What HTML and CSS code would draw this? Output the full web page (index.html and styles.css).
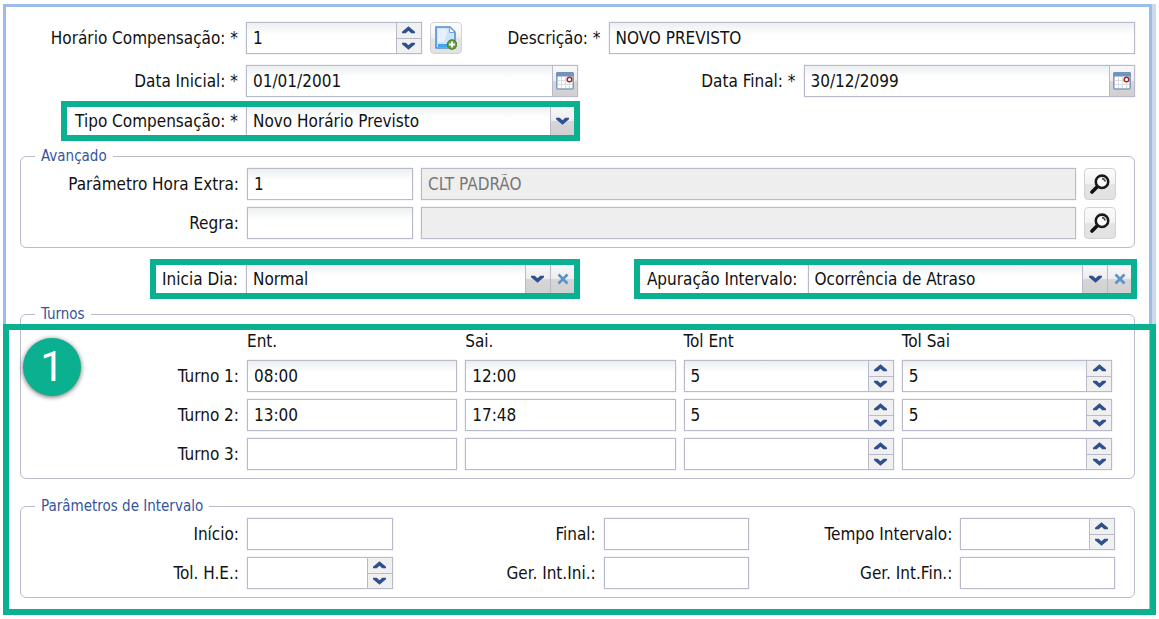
FILE: index.html
```html
<!DOCTYPE html>
<html lang="pt-BR">
<head>
  <meta charset="UTF-8" />
  <meta name="viewport" content="width=device-width, initial-scale=1.0"/>
  <title>Horário Compensação</title>
  <link rel="stylesheet" href="styles.css">
</head>
<body>
  <!-- Shared icons -->
  <svg class="sprite" aria-hidden="true">
    <symbol id="up" viewBox="0 0 14 8"><path d="M7 0 14 6V7.5H10L7 4.8 4 7.5H0V6Z"/></symbol>
    <symbol id="down" viewBox="0 0 14 8"><path d="M7 8 14 2V.5H10L7 3.2 4 .5H0V2Z"/></symbol>
    <symbol id="clear" viewBox="0 0 12 12"><path d="M1.5 1.5 10.5 10.5M10.5 1.5 1.5 10.5" fill="none" stroke="#5a93c8" stroke-width="2.6"/></symbol>
    <symbol id="calendar" viewBox="0 0 18 18">
      <rect x=".8" y="1" width="16.4" height="16" rx="1" fill="#fff" stroke="#7f9fc8" stroke-width="1.6"/>
      <path d="M0 1.5Q0 0 1.5 0H16.5Q18 0 18 1.5V4.5H0Z" fill="#7092bd"/>
      <path d="M2 8.5H16M2 12.5H16M5.5 5V16M9.5 5V16M13.5 5V16" stroke="#dcdcdc" stroke-width="1"/>
      <circle cx="13.5" cy="7.5" r="2.3" fill="#fff" stroke="#a3262a" stroke-width="1.5"/>
    </symbol>
    <symbol id="search" viewBox="0 0 20 20">
      <path d="M8 12 2 18" stroke="#111" stroke-width="3.6" stroke-linecap="round"/>
      <circle cx="12" cy="7.8" r="6.2" fill="#fff" stroke="#1a1a1a" stroke-width="2.6"/>
      <path d="M12 4.6Q14.8 4.8 15.2 7.6" fill="none" stroke="#555" stroke-width="1.6"/>
    </symbol>
    <symbol id="new" viewBox="0 0 22 24">
      <path d="M1 1H15L20 6V22H1Z" fill="#cfe4fb" stroke="#4f8fd6" stroke-width="1.6"/>
      <path d="M3 3H13L9 16H3Z" fill="#e6f1fd"/>
      <path d="M14.5 1V6.5H20Z" fill="#fff" stroke="#6fa5df"/>
      <path d="M3 18H13V21H3Z" fill="#42a5f0"/>
      <circle cx="17" cy="18.5" r="4.8" fill="#6a9c3c" stroke="#4b7b28"/>
      <path d="M17 15.5V21.5M14 18.5H20" stroke="#fff" stroke-width="1.8"/>
    </symbol>
  </svg>

  <main class="panel">
    <form>
      <div class="row row-first">
        <label class="label" for="codigo">Horário Compensação: *</label>
        <div class="control code">
          <input type="number" id="codigo" value="1" />
          <span class="spinner">
            <button type="button" aria-label="Aumentar"><svg><use href="#up"/></svg></button>
            <button type="button" aria-label="Diminuir"><svg><use href="#down"/></svg></button>
          </span>
        </div>
        <button type="button" class="tool" aria-label="Novo"><svg class="icon-new"><use href="#new"/></svg></button>
        <label class="label label-desc" for="descricao">Descrição: *</label>
        <div class="control description"><input type="text" id="descricao" value="NOVO PREVISTO" /></div>
      </div>

      <div class="row">
        <div class="field">
          <label class="label" for="dataInicial">Data Inicial: *</label>
          <div class="control">
            <input type="text" id="dataInicial" value="01/01/2001" />
            <button type="button" class="trigger" aria-label="Abrir calendário"><svg class="icon-calendar"><use href="#calendar"/></svg></button>
          </div>
        </div>
        <div class="field">
          <label class="label" for="dataFinal">Data Final: *</label>
          <div class="control">
            <input type="text" id="dataFinal" value="30/12/2099" />
            <button type="button" class="trigger" aria-label="Abrir calendário"><svg class="icon-calendar"><use href="#calendar"/></svg></button>
          </div>
        </div>
      </div>

      <div class="row row-type">
        <div class="field">
          <div class="highlight highlight-type">
            <label class="label" for="tipo">Tipo Compensação: *</label>
            <div class="control">
              <select id="tipo"><option>Novo Horário Previsto</option></select>
              <span class="trigger"><svg><use href="#down"/></svg></span>
            </div>
          </div>
        </div>
        <div class="field"></div>
      </div>

      <fieldset class="advanced">
        <legend>Avançado</legend>
        <div class="lookup">
          <label class="label" for="horaExtra">Parâmetro Hora Extra:</label>
          <div class="control"><input type="text" id="horaExtra" value="1" /></div>
          <div class="control disabled"><input type="text" value="CLT PADRÃO" aria-label="Descrição do parâmetro" disabled /></div>
          <button type="button" class="tool" aria-label="Pesquisar parâmetro"><svg class="icon-search"><use href="#search"/></svg></button>
        </div>
        <div class="lookup">
          <label class="label" for="regra">Regra:</label>
          <div class="control"><input type="text" id="regra" /></div>
          <div class="control disabled"><input type="text" aria-label="Descrição da regra" disabled /></div>
          <button type="button" class="tool" aria-label="Pesquisar regra"><svg class="icon-search"><use href="#search"/></svg></button>
        </div>
      </fieldset>

      <div class="row row-day">
        <div class="field">
          <div class="highlight highlight-day">
            <label class="label" for="iniciaDia">Inicia Dia:</label>
            <div class="control">
              <select id="iniciaDia"><option>Normal</option></select>
              <span class="trigger"><svg><use href="#down"/></svg></span>
              <button type="button" class="trigger" aria-label="Limpar"><svg class="icon-clear"><use href="#clear"/></svg></button>
            </div>
          </div>
        </div>
        <div class="field">
          <div class="highlight highlight-break">
            <label class="label" for="apuracao">Apuração Intervalo:</label>
            <div class="control">
              <select id="apuracao"><option>Ocorrência de Atraso</option></select>
              <span class="trigger"><svg><use href="#down"/></svg></span>
              <button type="button" class="trigger" aria-label="Limpar"><svg class="icon-clear"><use href="#clear"/></svg></button>
            </div>
          </div>
        </div>
      </div>

      <div class="step">
        <fieldset class="shifts">
          <legend>Turnos</legend>
          <div class="shift shift-head">
            <span></span><span id="ent">Ent.</span><span id="sai">Sai.</span><span id="tolEnt">Tol Ent</span><span id="tolSai">Tol Sai</span>
          </div>
          <div class="shift">
            <label class="label" id="t1" for="ent1">Turno 1:</label>
            <div class="control"><input type="text" id="ent1" value="08:00" /></div>
            <div class="control"><input type="text" value="12:00" aria-labelledby="t1 sai" /></div>
            <div class="control">
              <input type="number" value="5" aria-labelledby="t1 tolEnt" />
              <span class="spinner">
                <button type="button" aria-label="Aumentar"><svg><use href="#up"/></svg></button>
                <button type="button" aria-label="Diminuir"><svg><use href="#down"/></svg></button>
              </span>
            </div>
            <div class="control">
              <input type="number" value="5" aria-labelledby="t1 tolSai" />
              <span class="spinner">
                <button type="button" aria-label="Aumentar"><svg><use href="#up"/></svg></button>
                <button type="button" aria-label="Diminuir"><svg><use href="#down"/></svg></button>
              </span>
            </div>
          </div>
          <div class="shift">
            <label class="label" id="t2" for="ent2">Turno 2:</label>
            <div class="control flat"><input type="text" id="ent2" value="13:00" /></div>
            <div class="control flat"><input type="text" value="17:48" aria-labelledby="t2 sai" /></div>
            <div class="control flat">
              <input type="number" value="5" aria-labelledby="t2 tolEnt" />
              <span class="spinner">
                <button type="button" aria-label="Aumentar"><svg><use href="#up"/></svg></button>
                <button type="button" aria-label="Diminuir"><svg><use href="#down"/></svg></button>
              </span>
            </div>
            <div class="control flat">
              <input type="number" value="5" aria-labelledby="t2 tolSai" />
              <span class="spinner">
                <button type="button" aria-label="Aumentar"><svg><use href="#up"/></svg></button>
                <button type="button" aria-label="Diminuir"><svg><use href="#down"/></svg></button>
              </span>
            </div>
          </div>
          <div class="shift">
            <label class="label" id="t3" for="ent3">Turno 3:</label>
            <div class="control flat"><input type="text" id="ent3" /></div>
            <div class="control flat"><input type="text" aria-labelledby="t3 sai" /></div>
            <div class="control flat">
              <input type="number" aria-labelledby="t3 tolEnt" />
              <span class="spinner">
                <button type="button" aria-label="Aumentar"><svg><use href="#up"/></svg></button>
                <button type="button" aria-label="Diminuir"><svg><use href="#down"/></svg></button>
              </span>
            </div>
            <div class="control flat">
              <input type="number" aria-labelledby="t3 tolSai" />
              <span class="spinner">
                <button type="button" aria-label="Aumentar"><svg><use href="#up"/></svg></button>
                <button type="button" aria-label="Diminuir"><svg><use href="#down"/></svg></button>
              </span>
            </div>
          </div>
        </fieldset>

        <fieldset class="interval">
          <legend>Parâmetros de Intervalo</legend>
          <div class="interval-grid">
            <label class="label" for="inicio">Início:</label>
            <div class="control flat"><input type="text" id="inicio" /></div>
            <label class="label" for="final">Final:</label>
            <div class="control flat"><input type="text" id="final" /></div>
            <label class="label" for="tempo">Tempo Intervalo:</label>
            <div class="control flat">
              <input type="number" id="tempo" />
              <span class="spinner">
                <button type="button" aria-label="Aumentar"><svg><use href="#up"/></svg></button>
                <button type="button" aria-label="Diminuir"><svg><use href="#down"/></svg></button>
              </span>
            </div>
            <label class="label" for="tolHe">Tol. H.E.:</label>
            <div class="control flat">
              <input type="number" id="tolHe" />
              <span class="spinner">
                <button type="button" aria-label="Aumentar"><svg><use href="#up"/></svg></button>
                <button type="button" aria-label="Diminuir"><svg><use href="#down"/></svg></button>
              </span>
            </div>
            <label class="label" for="gerIni">Ger. Int.Ini.:</label>
            <div class="control flat"><input type="text" id="gerIni" /></div>
            <label class="label" for="gerFin">Ger. Int.Fin.:</label>
            <div class="control flat"><input type="text" id="gerFin" /></div>
          </div>
        </fieldset>
        <div class="step-frame"></div>
        <div class="step-badge">1</div>
      </div>
    </form>
  </main>
</body>
</html>
```
FILE: styles.css
```css
* {
  margin: 0;
  padding: 0;
  box-sizing: border-box;
}
body {
  padding: 4px 7px 6px 3px;
  font-family: Tahoma, 'DejaVu Sans Condensed', 'DejaVu Sans', sans-serif;
  font-size: 17px;
  line-height: 20px;
  color: #111;
  background: #fff;
}
.sprite {
  display: none;
}
.panel {
  padding: 15px 14px;
  border: 3px solid #9cbcec;
  border-bottom: none;
  box-shadow: 4px 0 0 #ccd9ea;
}

/* Rows and fields */
.row {
  display: flex;
  margin-bottom: 8px;
}
.row-first {
  margin-bottom: 11px;
}
.row-type {
  margin-bottom: 10px;
}
.row-day {
  margin: 15px 0 10px;
}
.field {
  display: flex;
  flex: 1;
  min-width: 0;
}
.label {
  flex: none;
  width: 226px;
  padding-right: 8px;
  line-height: 32px;
  text-align: right;
  white-space: nowrap;
}
.label-desc {
  width: 147px;
}
.control {
  display: flex;
  flex: 1;
  min-width: 0;
  height: 32px;
  border: 1px solid #b9bbcc;
  background: linear-gradient(#eceff0, #fff 12px);
  box-shadow: 0 0 1px #b9bbcc;
}
.flat {
  background: #fff;
}
.disabled {
  background: #eee;
}
.code {
  flex: 174;
  margin-right: 8px;
}
.description {
  flex: 526;
}
input,
select {
  flex: 1;
  width: 100%;
  min-width: 0;
  padding: 0 6px;
  border: none;
  outline: none;
  background: none;
  color: inherit;
  font: inherit;
  appearance: none;
}
input:disabled {
  color: #777;
}
input[type="number"] {
  appearance: textfield;
}
input::-webkit-inner-spin-button {
  display: none;
}
button {
  border: none;
  cursor: pointer;
}

/* Buttons inside and beside the fields */
.trigger {
  display: flex;
  flex: none;
  justify-content: center;
  align-items: center;
  width: 25px;
  border-left: 1px solid #b9bbcc;
  background: linear-gradient(#f8f8f8, #eee 48%, #d6d6d6 52%, #d0d0d0);
}
.spinner {
  display: flex;
  flex: none;
  flex-direction: column;
  width: 25px;
  border-left: 1px solid #b9bbcc;
}
.spinner button {
  display: flex;
  flex: 1;
  justify-content: center;
  align-items: center;
  background: #f0f0f1;
}
.spinner button + button {
  border-top: 1px solid #b9bbcc;
}
.spinner svg,
.trigger svg {
  width: 13px;
  height: 8px;
  fill: #304f8e;
}
.trigger .icon-calendar {
  width: 18px;
  height: 18px;
}
.trigger .icon-clear {
  width: 12px;
  height: 12px;
}
.tool {
  display: flex;
  flex: none;
  justify-content: center;
  align-items: center;
  width: 32px;
  height: 32px;
  border: 1px solid #d2d2d2;
  border-radius: 4px;
  background: linear-gradient(#fcfcfc, #f2f2f2 48%, #e4e4e4 52%, #e2e2e2);
}
.icon-new {
  width: 22px;
  height: 24px;
}
.icon-search {
  width: 20px;
  height: 20px;
}

/* Green markers */
.highlight {
  display: flex;
  flex: 1;
  margin-right: 2px;
  outline: 6px solid #0ab090;
  outline-offset: -2px;
}
.highlight-type {
  margin-left: 45px;
}
.highlight-type .label {
  width: 181px;
}
.highlight-day {
  margin-left: 134px;
}
.highlight-day .label {
  width: 92px;
}
.highlight-break {
  margin-left: 60px;
}
.highlight-break .label {
  width: 170px;
  padding-right: 10px;
}
.step {
  position: relative;
}
.step-frame {
  position: absolute;
  top: 19px;
  right: -21px;
  bottom: -17px;
  left: -17px;
  border: 6px solid #0ab090;
  pointer-events: none;
}
.step-badge {
  position: absolute;
  top: 33px;
  left: 3px;
  width: 58px;
  height: 58px;
  border-radius: 50%;
  background: #0ab090;
  color: #fff;
  font-family: Roboto, sans-serif;
  font-size: 42px;
  line-height: 58px;
  text-align: center;
  box-shadow: 0 1px 5px rgba(0, 0, 0, 0.6);
}

/* Fieldsets */
fieldset {
  min-width: 0;
  border: 1px solid #b9bbcc;
  border-radius: 6px;
}
legend {
  margin-left: 14px;
  padding: 0 6px;
  color: #34569c;
  font-size: 15px;
  line-height: 18px;
}
.advanced {
  padding: 3px 18px 8px 0;
}
.lookup {
  display: grid;
  grid-template-columns: 226px 166px 1fr 32px;
}
.lookup .disabled {
  margin: 0 8px;
}
.lookup + .lookup,
.shift + .shift {
  margin-top: 7px;
}
.shifts {
  padding: 8px 22px 8px 0;
}
.shift {
  display: grid;
  grid-template-columns: 218px repeat(4, 1fr);
  column-gap: 8px;
}
.shift-head {
  padding-bottom: 2px;
}
.shift .label {
  width: 218px;
  padding-right: 0;
}
.interval {
  margin-top: 18px;
  padding: 3px 19px 8px 0;
}
.interval-grid {
  display: grid;
  grid-template-columns: 226px 146fr 211px 146fr 211px 155fr;
  row-gap: 7px;
}
.interval .label {
  width: auto;
}
```
